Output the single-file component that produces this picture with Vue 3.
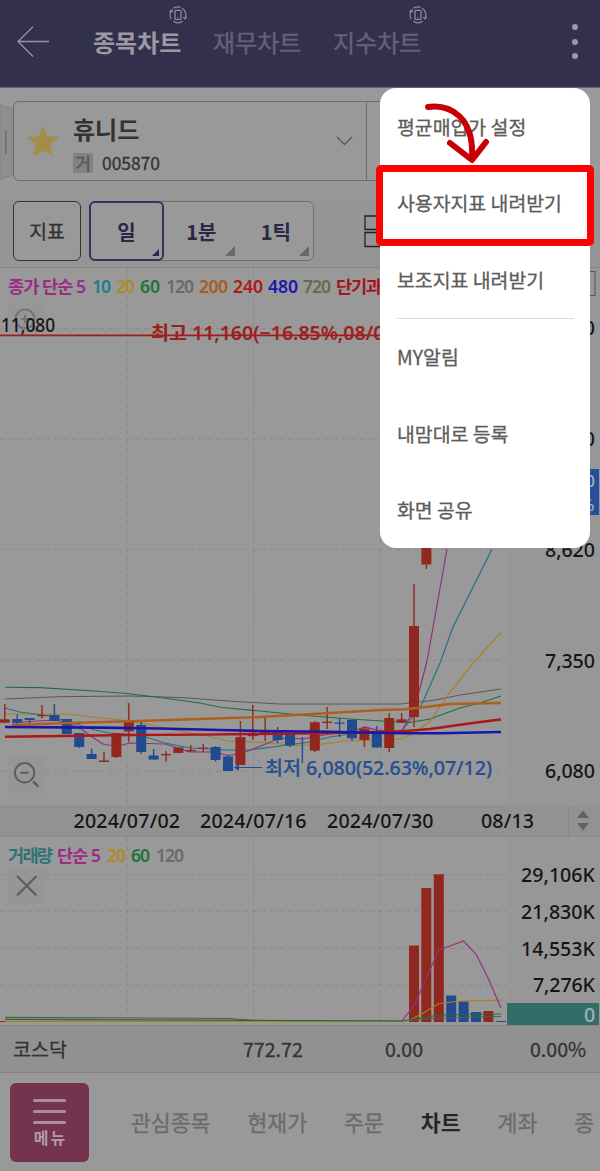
<!-- Stock chart screen with the overflow menu opened -->
<script setup>
const periods = [
  { label: '일', active: true },
  { label: '1분', active: false },
  { label: '1틱', active: false },
]

const menuItems = ['평균매입가 설정', '사용자지표 내려받기', '보조지표 내려받기', 'MY알림', '내맘대로 등록', '화면 공유']

const navItems = ['관심종목', '현재가', '주문', '차트', '계좌', '종']

const priceLegend = [
  { text: '종가 단순 5', x: 8, w: 78, color: '#9c2b85' },
  { text: '10', x: 92, w: 19, color: '#1f7d8c' },
  { text: '20', x: 116, w: 19, color: '#b08a1c' },
  { text: '60', x: 140, w: 20, color: '#1d7437' },
  { text: '120', x: 166, w: 28, color: '#6a6a6a' },
  { text: '200', x: 199, w: 29, color: '#a75c20' },
  { text: '240', x: 233, w: 30, color: '#b3161c' },
  { text: '480', x: 268, w: 30, color: '#1c17ad' },
  { text: '720', x: 303, w: 28, color: '#6d6849' },
  { text: '단기과열', x: 336, w: 61, color: '#a8141c' },
]

const volumeLegend = [
  { text: '거래량', x: 8, w: 45, color: '#2d7472' },
  { text: '단순 5', x: 57, w: 44, color: '#9c2b85' },
  { text: '20', x: 107, w: 19, color: '#b08a1c' },
  { text: '60', x: 131, w: 19, color: '#1d7437' },
  { text: '120', x: 156, w: 28, color: '#6a6a6a' },
]

const priceLabels = [
  { text: '11,160', y: 335, w: 62 },
  { text: '9,890', y: 446, w: 50 },
  { text: '8,620', y: 557, w: 50 },
  { text: '7,350', y: 667.5, w: 50 },
  { text: '6,080', y: 778, w: 50 },
]

const volumeLabels = [
  { text: '29,106K', y: 882, w: 74 },
  { text: '21,830K', y: 918.5, w: 74 },
  { text: '14,553K', y: 955.5, w: 74 },
  { text: '7,276K', y: 992, w: 62 },
]

const dates = [
  { text: '2024/07/02', x: 73.5, w: 106.5 },
  { text: '2024/07/16', x: 200, w: 106.5 },
  { text: '2024/07/30', x: 327, w: 106.5 },
  { text: '08/13', x: 481, w: 53 },
]

// [up, wick top, wick bottom, body top, body bottom]
const candles = [
  [1, 704, 723, 719.3, 722.7],
  [0, 714.5, 724, 719, 722.7],
  [0, 718, 727, 718, 720],
  [1, 705, 718.5, 715, 716.2],
  [0, 704, 721, 715, 721],
  [0, 719, 734, 719, 734],
  [0, 733, 748, 733, 747],
  [0, 748.5, 759, 754, 759],
  [1, 752, 762, 760.5, 762],
  [1, 733, 758, 733.3, 757],
  [1, 703, 742, 720, 731.5],
  [0, 722, 754, 725, 752],
  [0, 749, 759.5, 755.5, 759.5],
  [1, 751, 761.5, 754, 755.3],
  [1, 747.5, 753, 747.5, 753],
  [1, 745, 752, 750, 751.3],
  [1, 744, 752, 747.5, 748.5],
  [0, 746, 761.5, 747, 760],
  [0, 755, 771, 756.5, 771],
  [1, 721, 765, 737, 765],
  [1, 705, 740, 735, 736.2],
  [1, 717.5, 741, 731, 734],
  [0, 727, 743, 730, 740],
  [0, 734, 747, 734, 745.5],
  [0, 737, 763, 737, 738],
  [1, 721, 752, 722.3, 750.6],
  [1, 707, 729, 721.7, 723],
  [0, 718, 737, 722.5, 723.7],
  [0, 719, 741, 720, 738.3],
  [1, 727, 747, 728.5, 740],
  [0, 726, 747.5, 732.7, 747.5],
  [1, 713, 752, 718, 748],
  [1, 713, 722.7, 719.3, 722.7],
  [1, 584, 727, 626, 717],
  [1, 500, 569, 520, 564.5],
]

const priceLines = [
  { color: '#595959', w: 1, pts: '5,699 60,696.7 130,696 180,697.5 215,700 240,701.8 280,704 400,704 420,702 435,700 460,695 501,689' },
  { color: '#1f6f3c', w: 1.1, pts: '5,687.2 40,687.6 90,690.8 127,693.5 160,697.5 200,703 222,707.5 260,711 300,715 350,719 390,721.5 410,722.5 430,719 460,708 480,703 501,696' },
  { color: '#a8821e', w: 1.2, pts: '5,714 68,714 100,718 127,720.5 150,725 180,731 205,735.5 228,741 265,742.5 295,745.5 315,745 345,741 370,740.5 390,740.5 402,738.5 415,733 430,721 450,692 475,661 501,632.5' },
  { color: '#1f7584', w: 1.2, pts: '5,708 20,712 50,716 70,722 95,730 110,733 127,734 147,737.5 165,743 190,748 228,750 250,750 280,746 310,742 330,737 350,734 402,731 422,704 440,663 453,627 492,549' },
  { color: '#93317f', w: 1.2, pts: '12,723 30,721.5 55,720 68,723 80,728 92,737 104,744.5 118,746 130,743 165,744 190,752 215,752 228,755.5 240,754 253,749 277,739.5 290,737.5 302,739 330,734 352,731.5 365,727 377,730 389,731.5 402,730 412,714 420,688 427,661 447,549' },
  { color: '#ad5f1c', w: 2.4, pts: '12,725 60,723.3 130,721.3 200,719 260,717 330,713 380,710 405,709.3 430,706.5 450,704 501,703' },
  { color: '#ad161c', w: 2.4, pts: '5,736.8 60,736 130,735 200,734.6 260,734 330,733 400,731.5 430,729 455,725.5 480,722 501,719.5' },
  { color: '#1a16a8', w: 2.6, pts: '5,727 100,727.6 160,728.5 220,730 260,731 330,731.8 400,733.2 440,733.2 501,732' },
]

const volumeBars = [
  { x: 409, y: 945.5, up: true },
  { x: 421.3, y: 888, up: true },
  { x: 433.8, y: 874.3, up: true },
  { x: 446.2, y: 995.5, up: false },
  { x: 458.6, y: 1001.5, up: false },
  { x: 471, y: 1012, up: false },
  { x: 483.4, y: 1011, up: true },
  { x: 495.8, y: 1021, up: false },
]

const volumeLines = [
  { color: '#595959', pts: '5,1017.3 150,1018 230,1018.5 255,1020.5 402,1021 440,1018 501,1016.5' },
  { color: '#a8821e', pts: '5,1021.3 402,1021.3 410,1020 425,1012 439,1003.5 460,1001 501,1000.3' },
  { color: '#1f6f3c', pts: '5,1019.3 150,1019.8 402,1021 420,1018 440,1015 501,1014' },
  { color: '#93317f', pts: '402,1021 415,1004 427,976 439,950 450,946 463.5,941 476,954 488,978 501,1008' },
]

const candleX = (i) => 4.8 + i * 12.4
const tone = (up) => (up ? '#912820' : '#214b8f')
</script>

<template>
  <div class="screen">
    <header class="header">
      <svg class="back" viewBox="0 0 34 32">
        <path d="M32 15.5H1M16 .8L1 15.5L16 30.5" />
      </svg>
      <div v-for="(tab, i) in ['종목차트', '재무차트', '지수차트']" :key="tab" :class="['tab', i === 0 ? 'active' : '']">
        {{ tab }}
        <svg v-if="i !== 1" class="rotate" viewBox="0 0 18 18">
          <rect x="6" y="4.3" width="6" height="9.2" rx="1" />
          <path d="M4.5 2.2A8 8 0 0 1 11.5 1.4M13 2.2A8 8 0 0 1 16 12.6M14.2 11.4L16 12.8L17.5 11M3.6 3.4A8 8 0 0 0 2.2 13.2M.5 6L2 4.6L3.8 5.8M4.4 15.2A8 8 0 0 0 13.6 15.2M8.4 11.6H9.6" />
        </svg>
      </div>
      <div class="dots"><i></i><i></i><i></i></div>
    </header>

    <section class="stock">
      <svg class="handle" viewBox="0 0 14 82">
        <path class="flap" d="M0 1L13 5V77L0 81Z" />
        <path class="grip" d="M6.2 28V54" />
      </svg>
      <div class="stock-box">
        <svg class="star" viewBox="0 0 34 32">
          <path d="M17 1L21.5 11.2L33 12L24.3 19.5L27 31L17 25.5L7 31L9.7 19.5L1 12L12.5 11.2Z" />
        </svg>
        <div class="stock-text">
          <strong>휴니드</strong>
          <div class="code"><span class="badge">거</span>005870</div>
        </div>
        <svg class="chevron" viewBox="0 0 17 10"><path d="M1 1L8.5 8.5L16 1" /></svg>
        <span class="box-split"></span>
      </div>
    </section>

    <section class="toolbar">
      <button class="indicator" type="button">지표</button>
      <div class="periods">
        <button v-for="p in periods" :key="p.label" type="button" :class="['period', p.active ? 'active' : '']">
          {{ p.label }}
          <svg class="corner" viewBox="0 0 10 10"><path d="M10 0V10H0Z" /></svg>
        </button>
      </div>
      <svg class="layout-icon" viewBox="0 0 32 34">
        <path d="M1 1H31V14.5H1ZM1 17.5H31V31.5H1Z" />
      </svg>
    </section>

    <svg class="chart" viewBox="0 267 600 758">
      <rect class="axis-bg" x="507" y="268" width="93" height="757" />
      <path class="edge" d="M0 267.5H600" />
      <g class="grid">
        <path d="M127 268V805M253.5 268V805M380.5 268V805M127 837V1025M253.5 837V1025M380.5 837V1025" />
        <path d="M0 328.5H507M0 439.3H507M0 549.5H507M0 660.5H507M0 771.2H507" />
        <path d="M0 874.5H507M0 911.3H507M0 948.3H507M0 985H507" />
      </g>

      <text
        v-for="l in priceLegend"
        :key="l.text"
        class="legend"
        :x="l.x"
        y="293"
        :textLength="l.w"
        :fill="l.color"
      >{{ l.text }}</text>
      <rect class="select" x="560" y="271.5" width="35" height="24" />

      <rect class="icon-bg" x="8" y="303" width="38" height="34" />
      <g class="magnifier light">
        <circle cx="25" cy="319" r="9.5" />
        <path d="M25 315V323M21 319H29" />
        <path class="stem" d="M33 327L38 332" />
      </g>
      <text class="num" x="1" y="331.5" textLength="54" lengthAdjust="spacingAndGlyphs">11,080</text>
      <text class="num high" x="151" y="339.5" textLength="251">최고 11,160(−16.85%,08/09)</text>
      <path class="limit" d="M0 335.4H507" />

      <polyline
        v-for="l in priceLines.slice(0, 5)"
        :key="l.color"
        :points="l.pts"
        :stroke="l.color"
        :stroke-width="l.w"
      />
      <g v-for="(c, i) in candles" :key="i">
        <path :d="`M${candleX(i)} ${c[1]}V${c[2]}`" :stroke="tone(c[0])" stroke-width="1.4" />
        <rect
          v-if="i !== 24"
          :x="candleX(i) - 5"
          :y="c[3]"
          width="10"
          :height="c[4] - c[3]"
          :fill="tone(c[0])"
        />
      </g>
      <polyline
        v-for="l in priceLines.slice(5)"
        :key="l.color"
        :points="l.pts"
        :stroke="l.color"
        :stroke-width="l.w"
      />

      <path class="low-line" d="M236 767.5H262" />
      <path class="low-head" d="M233.5 767.5L239 764.5V770.5Z" />
      <text class="num low" x="265" y="775" textLength="227">최저 6,080(52.63%,07/12)</text>

      <rect class="icon-bg" x="8" y="757" width="38" height="36" />
      <g class="magnifier">
        <circle cx="24.6" cy="772.8" r="9.7" />
        <path d="M20.5 772.8H28.7" />
        <path class="stem" d="M33 781.5L38.5 786.5" />
      </g>

      <text v-for="l in priceLabels" :key="l.text" class="num" :x="595 - l.w" :y="l.y" :textLength="l.w">{{ l.text }}</text>
      <rect class="now" x="507" y="469" width="92" height="46" />
      <text class="num now-text" x="548" y="487" textLength="47">9,280</text>
      <text class="num now-text" x="580" y="511">%</text>

      <rect class="date-bg" x="0" y="805" width="600" height="31" />
      <path class="edge" d="M0 836H600M568.5 805V836" />
      <text v-for="d in dates" :key="d.text" class="num" :x="d.x" y="828" :textLength="d.w">{{ d.text }}</text>
      <path class="sort" d="M583 810.5L589 818H577ZM583 830.5L589 823H577Z" />

      <text
        v-for="l in volumeLegend"
        :key="l.text"
        class="legend"
        :x="l.x"
        y="862"
        :textLength="l.w"
        :fill="l.color"
      >{{ l.text }}</text>
      <rect class="icon-bg" x="8" y="868" width="38" height="36" />
      <path class="close" d="M17 876L36.5 895.5M36.5 876L17 895.5" />

      <rect
        v-for="b in volumeBars"
        :key="b.x"
        :x="b.x"
        :y="b.y"
        width="10"
        :height="1022 - b.y"
        :fill="tone(b.up)"
      />
      <path class="base" d="M0 1021.5H5" />
      <polyline v-for="l in volumeLines" :key="l.color" :points="l.pts" :stroke="l.color" stroke-width="1.2" />

      <text v-for="l in volumeLabels" :key="l.text" class="num" :x="595 - l.w" :y="l.y" :textLength="l.w">{{ l.text }}</text>
      <rect class="zero" x="507" y="1003" width="92" height="22.5" />
      <text class="num zero-text" x="584" y="1022">0</text>
    </svg>

    <section class="index">
      <span>코스닥</span>
      <span>772.72</span>
      <span>0.00</span>
      <span>0.00%</span>
    </section>

    <nav class="nav">
      <div class="menu-button">
        <i></i><i></i><i></i>
        <b>메뉴</b>
      </div>
      <span v-for="n in navItems" :key="n" :class="['nav-item', n === '차트' ? 'active' : '']">{{ n }}</span>
    </nav>

    <div class="menu">
      <div v-for="(m, i) in menuItems" :key="m" :class="['menu-item', i === 3 ? 'divided' : '']">{{ m }}</div>
    </div>
    <div class="highlight"></div>
    <svg class="arrow" viewBox="0 0 70 66">
      <path d="M8 8C30 5 54 18 52 58M30 44L52 61L66 43" />
    </svg>
  </div>
</template>

<style>
body {
  background: #999;
}
</style>

<style scoped>
.screen {
  position: relative;
  display: flex;
  flex-direction: column;
  width: 600px;
  height: 1171px;
  overflow: hidden;
  background: #999;
  color: #333;
  font-family: 'Noto Sans CJK KR', sans-serif;
}

svg {
  display: block;
  flex: none;
  fill: none;
}

button {
  padding: 0;
  background: none;
  font-family: inherit;
}

.header {
  display: flex;
  align-items: center;
  box-sizing: border-box;
  height: 88px;
  padding: 0 20px 4px 17px;
  background: #33304e;
  border-bottom: 1px solid #62627a;
}

.back {
  width: 34px;
  height: 32px;
  margin-right: 42px;
  stroke: #96959c;
  stroke-width: 1.3;
}

.tab {
  position: relative;
  width: 89px;
  margin-right: 31px;
  color: #636177;
  font-size: 24px;
  line-height: 30px;
  white-space: nowrap;
  -webkit-text-stroke: 0.4px currentColor;
}

.tab.active {
  color: #9b9aa2;
  font-weight: 700;
  -webkit-text-stroke: 0;
}

.rotate {
  position: absolute;
  top: -21px;
  left: 75.5px;
  width: 18px;
  height: 18px;
  stroke: #908f9a;
  stroke-width: 1.2;
}

.dots {
  display: flex;
  flex-direction: column;
  gap: 8.5px;
  margin-left: auto;
  margin-right: 2px;
}

.dots i {
  width: 6px;
  height: 6px;
  border-radius: 50%;
  background: #9b9aa2;
}

.stock {
  display: flex;
  height: 102px;
  padding-top: 13px;
  box-sizing: border-box;
}

.handle {
  width: 13px;
  height: 82px;
}

.flap {
  fill: #8e8e8e;
  stroke: #828282;
}

.grip {
  stroke: #6b6b6b;
  stroke-width: 1.5;
}

.stock-box {
  display: flex;
  align-items: center;
  box-sizing: border-box;
  width: 575px;
  height: 80px;
  padding-left: 12px;
  border: 1.5px solid #6c6c6c;
  border-radius: 6px;
}

.star {
  width: 34px;
  height: 32px;
  fill: #a58c48;
}

.stock-text {
  width: 263px;
  margin: 7px 0 0 13px;
}

.stock-text strong {
  display: block;
  font-size: 24px;
  line-height: 30px;
}

.code {
  display: flex;
  align-items: center;
  gap: 9px;
  margin-top: 6px;
  font-size: 17.4px;
  line-height: 26px;
  -webkit-text-stroke: 0.3px currentColor;
}

.badge {
  width: 20px;
  height: 20px;
  background: #828282;
  color: #555;
  font-size: 17px;
  line-height: 19px;
  text-align: center;
}

.chevron {
  width: 17px;
  height: 10px;
  stroke: #595959;
  stroke-width: 1.3;
}

.box-split {
  align-self: stretch;
  width: 1px;
  margin-left: 13px;
  background: #6c6c6c;
}

.toolbar {
  display: flex;
  box-sizing: border-box;
  height: 77px;
  padding: 11px 0 0 13px;
  background: linear-gradient(#999, #959595 12px);
}

.indicator {
  box-sizing: border-box;
  width: 68px;
  height: 60px;
  border: 1.5px solid #333;
  border-radius: 6px;
  background: #999;
  color: #333;
  font-size: 19.3px;
  -webkit-text-stroke: 0.4px currentColor;
}

.periods {
  display: flex;
  box-sizing: border-box;
  width: 225px;
  height: 60px;
  margin-left: 8px;
  border: 1px solid #707070;
  border-radius: 6px;
  background: #999;
}

.period {
  position: relative;
  flex: 1;
  border: none;
  color: #2a2747;
  font-size: 20px;
  font-weight: 700;
}

.period.active {
  flex: 0 0 75px;
  box-sizing: border-box;
  margin: -1px 0 -1px -1px;
  border: 2px solid #36325f;
  border-radius: 6px;
}

.corner {
  position: absolute;
  right: 4px;
  bottom: 4px;
  width: 10px;
  height: 10px;
  fill: #686868;
}

.active .corner {
  right: 3px;
  bottom: 3px;
  width: 7px;
  height: 7px;
  fill: #2a2747;
}

.layout-icon {
  width: 32px;
  height: 34px;
  margin: 14px 0 0 50px;
  stroke: #222;
  stroke-width: 1.3;
}

.chart {
  width: 600px;
  height: 758px;
  overflow: visible;
}

.axis-bg {
  fill: #979797;
}

.edge {
  stroke: #868686;
}

.grid {
  stroke: #8b8b8b;
  stroke-dasharray: 5 4;
}

.legend {
  font-family: 'Noto Sans', 'Noto Sans CJK KR', sans-serif;
  font-size: 17.6px;
  font-weight: 600;
}

.num {
  fill: #151515;
  font-family: 'Noto Sans', 'Noto Sans CJK KR', sans-serif;
  font-size: 19.6px;
  font-weight: 500;
}

.num.high {
  fill: #9b211d;
  font-weight: 600;
}

.num.low {
  fill: #244f92;
  stroke: #244f92;
  stroke-width: 0.2;
}

.limit {
  stroke: #a31d1d;
  stroke-width: 1.6;
}

.select {
  stroke: #555;
}

.icon-bg {
  fill: #969696;
}

.magnifier {
  stroke: #5e5e5e;
  stroke-width: 2;
}

.magnifier.light {
  stroke: #737373;
}

.stem {
  stroke-width: 2.6;
}

.low-line {
  stroke: #244f92;
}

.low-head {
  fill: #244f92;
}

.now {
  fill: #24509a;
}

.now-text {
  fill: #a5b0b8;
  font-size: 17px;
}

.zero-text {
  fill: #a5b0b8;
}

.date-bg {
  fill: #929292;
}

.sort {
  fill: #626262;
}

.close {
  stroke: #5e5e5e;
  stroke-width: 2.2;
}

.base {
  stroke: #b3161c;
}

.zero {
  fill: #336d6a;
}

.index {
  display: grid;
  grid-template-columns: 230px 142px 145px 1fr;
  align-items: center;
  box-sizing: border-box;
  height: 48px;
  padding: 0 0 1px 13px;
  background: #919191;
  border-top: 1px solid #858585;
  border-bottom: 1px solid #858585;
  font-size: 19.6px;
  line-height: 28px;
  -webkit-text-stroke: 0.3px currentColor;
}

.nav {
  display: flex;
  align-items: center;
  height: 98px;
  padding-left: 10px;
}

.menu-button {
  display: flex;
  flex: none;
  flex-direction: column;
  align-items: center;
  gap: 8px;
  box-sizing: border-box;
  width: 79px;
  height: 79px;
  margin: 1px 42px 0 0;
  padding-top: 16px;
  border-radius: 6px;
  background: #74344f;
  color: #b09aa5;
}

.menu-button i {
  width: 33px;
  height: 3px;
  border-radius: 2px;
  background: #a98f9b;
}

.menu-button b {
  font-size: 16px;
  letter-spacing: 2px;
  line-height: 17px;
  margin: -3px -2px 0 0;
}

.nav-item {
  flex: none;
  margin-right: 37px;
  color: #6b6b6b;
  font-size: 21.6px;
  line-height: 28px;
  -webkit-text-stroke: 0.3px currentColor;
}

.nav-item.active {
  color: #262626;
  font-weight: 700;
  -webkit-text-stroke: 0;
}

/* overlays above the dimmed screen */
.menu {
  position: absolute;
  top: 88px;
  left: 380px;
  display: flex;
  flex-direction: column;
  box-sizing: border-box;
  width: 210px;
  height: 460px;
  padding: 0 16px 0 17px;
  border-radius: 16px;
  background: #fff;
}

.menu-item {
  display: flex;
  flex: 1;
  align-items: center;
  box-sizing: border-box;
  padding-top: 1px;
  color: #5c5c5c;
  font-size: 19.4px;
  line-height: 28px;
  white-space: nowrap;
  -webkit-text-stroke: 0.3px currentColor;
}

.menu-item.divided {
  border-top: 1.5px solid #ddd;
}

.highlight {
  position: absolute;
  top: 165px;
  left: 376px;
  box-sizing: border-box;
  width: 218px;
  height: 81px;
  border: 7px solid #f00;
  border-radius: 5px;
}

.arrow {
  position: absolute;
  top: 99px;
  left: 420px;
  width: 70px;
  height: 66px;
  stroke: #c80006;
  stroke-width: 6;
  stroke-linecap: round;
  stroke-linejoin: round;
}
</style>
